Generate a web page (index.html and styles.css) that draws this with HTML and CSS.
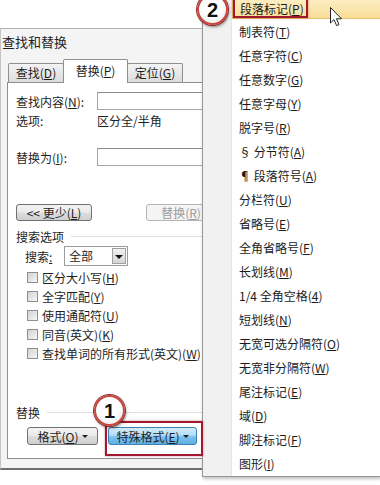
FILE: index.html
```html
<!DOCTYPE html>
<html lang="zh-CN">
<head>
<meta charset="utf-8">
<title>查找和替换 - 特殊格式</title>
<link rel="stylesheet" href="styles.css">
</head>
<body>
<div class="screen">
  <!-- dialog -->
  <div class="dialog">
    <div class="title">查找和替换</div>
    <div class="tabs">
      <div class="tab t1">查找(<u>D</u>)</div>
      <div class="tab active">替换(<u>P</u>)</div>
      <div class="tab t3">定位(<u>G</u>)</div>
    </div>
    <div class="panel">
      <div class="field-row find">
        <span class="label">查找内容(<u>N</u>):</span>
        <span class="input"></span>
      </div>
      <div class="field-row opts">
        <span class="label">选项:</span>
        <span>区分全/半角</span>
      </div>
      <div class="field-row repl">
        <span class="label">替换为(<u>I</u>):</span>
        <span class="input"></span>
      </div>
      <div class="btn-row">
        <span class="btn less">&lt;&lt; 更少(<u>L</u>)</span>
        <span class="btn disabled">替换(<u>R</u>)</span>
      </div>
      <div class="group-title first"><span>搜索选项</span></div>
      <div class="search-row">
        <span class="label">搜索<u>:</u></span>
        <span class="combo">
          <span class="combo-text">全部</span>
          <span class="combo-btn"></span>
        </span>
      </div>
      <div class="checks">
        <div class="check"><span class="box"></span>区分大小写(<u>H</u>)</div>
        <div class="check"><span class="box"></span>全字匹配(<u>Y</u>)</div>
        <div class="check"><span class="box"></span>使用通配符(<u>U</u>)</div>
        <div class="check"><span class="box"></span>同音(英文)(<u>K</u>)</div>
        <div class="check"><span class="box"></span>查找单词的所有形式(英文)(<u>W</u>)</div>
      </div>
      <div class="group-title second"><span>替换</span></div>
      <div class="bottom-btns">
        <span class="btn fmt">格式(<u>O</u>) <i class="arrow"></i></span>
        <span class="btn special">特殊格式(<u>E</u>) <i class="arrow"></i></span>
      </div>
    </div>
  </div>

  <!-- special format menu -->
  <div class="menu">
    <div class="item hover">段落标记(<u>P</u>)</div>
    <div class="item">制表符(<u>T</u>)</div>
    <div class="item">任意字符(<u>C</u>)</div>
    <div class="item">任意数字(<u>G</u>)</div>
    <div class="item">任意字母(<u>Y</u>)</div>
    <div class="item">脱字号(<u>R</u>)</div>
    <div class="item">§ 分节符(<u>A</u>)</div>
    <div class="item">¶ 段落符号(<u>A</u>)</div>
    <div class="item">分栏符(<u>U</u>)</div>
    <div class="item">省略号(<u>E</u>)</div>
    <div class="item">全角省略号(<u>F</u>)</div>
    <div class="item">长划线(<u>M</u>)</div>
    <div class="item">1/4 全角空格(<u>4</u>)</div>
    <div class="item">短划线(<u>N</u>)</div>
    <div class="item">无宽可选分隔符(<u>O</u>)</div>
    <div class="item">无宽非分隔符(<u>W</u>)</div>
    <div class="item">尾注标记(<u>E</u>)</div>
    <div class="item">域(<u>D</u>)</div>
    <div class="item">脚注标记(<u>F</u>)</div>
    <div class="item">图形(<u>I</u>)</div>
  </div>

  <!-- annotations -->
  <div class="frame frame-special"></div>
  <div class="frame frame-item"></div>
  <div class="badge badge-1">1</div>
  <div class="badge badge-2">2</div>
  <svg class="cursor" width="13" height="20" viewBox="0 0 13 20">
    <path d="M0.5 0.5 L0.5 16 L4 12.6 L6.6 18.6 L9 17.6 L6.5 11.8 L11.5 11.8 Z" fill="#fff" stroke="#222" stroke-width="1"/>
  </svg>
</div>
</body>
</html>
```

FILE: styles.css
```css
* {
    margin: 0;
    padding: 0;
    box-sizing: border-box;
}

body {
    width: 380px;
    height: 485px;
    overflow: hidden;
    background: #fff;
    font-family: "Noto Sans CJK SC", "Noto Sans", sans-serif;
    font-size: 12px;
    color: #1e1e1e;
}

u {
    text-decoration: underline;
    text-underline-offset: 1px;
}

.screen {
    position: relative;
    display: flex;
    height: 485px;
}

/* dialog */

.dialog {
    flex: none;
    width: 202px;
    height: 442px;
    margin-top: 28px;
    overflow: hidden;
    background: #f4f4f4;
    border-top: 1px solid #b4b4b4;
    border-left: 1px solid #c4c4c4;
    border-bottom: 2px solid #6f6f6f;
}

.title {
    height: 26px;
    line-height: 26px;
    padding-left: 1px;
    font-size: 13px;
}

.tabs {
    display: flex;
    align-items: flex-end;
    height: 27px;
    padding-left: 7px;
}

.tab {
    position: relative;
    height: 19px;
    line-height: 18px;
    text-align: center;
    border: 1px solid #8e8f8f;
    border-bottom: none;
    background: linear-gradient(#f4f4f4, #dcdcdc);
    border-radius: 2px 2px 0 0;
}

.t1 {
    width: 56px;
}

.t3 {
    width: 56px;
    margin-left: -1px;
}

.tab.active {
    z-index: 1;
    width: 65px;
    height: 24px;
    margin-left: -1px;
    margin-bottom: -1px;
    line-height: 21px;
    background: #fff;
}

.panel {
    width: 300px;
    height: 377px;
    margin-left: 6px;
    padding-left: 8px;
    background: #fff;
    border: 1px solid #8e8f8f;
}

.field-row {
    display: flex;
    align-items: center;
}

.field-row .label {
    width: 81px;
    flex: none;
}

.find {
    height: 18px;
    margin-top: 9px;
}

.opts {
    height: 14px;
    margin-top: 3px;
}

.repl {
    height: 18px;
    margin-top: 21px;
}

.input {
    width: 200px;
    height: 18px;
    border: 1px solid #a6a6a6;
    border-top-color: #8a8a8a;
    background: #fff;
}

.btn {
    display: flex;
    align-items: center;
    justify-content: center;
    height: 17px;
    border: 1px solid #707070;
    border-radius: 3px;
    background: linear-gradient(#f3f3f3 0%, #ebebeb 48%, #dddddd 52%, #cfcfcf 100%);
    white-space: nowrap;
}

.btn-row {
    display: flex;
    gap: 54px;
    height: 17px;
    margin-top: 38px;
}

.less {
    width: 76px;
}

.btn.disabled {
    width: 70px;
    color: #9a9a9a;
    border-color: #b5b5b5;
    background: #f4f4f4;
}

.group-title {
    display: flex;
    align-items: center;
    height: 14px;
}

.group-title::after {
    content: "";
    flex: 1;
    height: 1px;
    margin-left: 7px;
    background: #d5dfe5;
}

.group-title.first {
    margin-top: 8px;
}

.group-title.second {
    margin-top: 42px;
}

.search-row {
    display: flex;
    align-items: center;
    height: 20px;
    margin-top: 3px;
    padding-left: 9px;
}

.search-row .label {
    width: 39px;
}

.combo {
    display: flex;
    width: 64px;
    height: 20px;
    border: 1px solid #9c9c9c;
    background: #fff;
}

.combo-text {
    flex: 1;
    line-height: 18px;
    padding-left: 4px;
}

.combo-btn {
    position: relative;
    width: 14px;
    margin: 1px;
    border: 1px solid #a0a0a0;
    background: linear-gradient(#f0f0f0, #d6d6d6);
}

.combo-btn::after {
    content: "";
    position: absolute;
    left: 2px;
    top: 6px;
    border-left: 4px solid transparent;
    border-right: 4px solid transparent;
    border-top: 4px solid #111;
}

.checks {
    margin-top: 2px;
    padding-left: 11px;
}

.check {
    display: flex;
    align-items: center;
    height: 19px;
    white-space: nowrap;
}

.box {
    flex: none;
    width: 11px;
    height: 11px;
    margin-right: 4px;
    border: 1px solid #8f8f8f;
    background: linear-gradient(135deg, #d2d2d2, #f6f6f6);
}

.bottom-btns {
    display: flex;
    gap: 10px;
    height: 18px;
    margin-top: 8px;
    padding-left: 11px;
}

.bottom-btns .btn {
    height: 18px;
}

.fmt {
    width: 71px;
}

.btn.special {
    width: 89px;
    border-color: #3c7fb1;
    background: linear-gradient(#d4ecfb 0%, #b4dcf6 45%, #7cc0ec 55%, #5fb0e4 100%);
}

.arrow {
    display: inline-block;
    margin-left: 3px;
    border-left: 3px solid transparent;
    border-right: 3px solid transparent;
    border-top: 3px solid #222;
}

/* popup menu */

.menu {
    flex: none;
    width: 178px;
    height: 481px;
    margin-top: -4px;
    border-left: 1px solid #979797;
    border-bottom: 1px solid #979797;
    background: linear-gradient(to right, #f1f1f1 0, #f1f1f1 28px, #e4e4e4 28px, #e4e4e4 29px, #fff 29px);
    box-shadow: 1px 2px 3px rgba(0, 0, 0, 0.25);
}

.item {
    height: 24px;
    line-height: 24px;
    margin-left: 29px;
    padding-left: 7px;
    color: #1b1b1b;
    white-space: nowrap;
}

.item.hover {
    line-height: 22px;
    margin-top: 1px;
    margin-bottom: 1px;
    height: 22px;
    background: linear-gradient(#fdefc6, #f9dd98);
    border: 1px solid #e5c16f;
    border-right: none;
}

/* annotations */

.frame {
    position: absolute;
    border: 2px solid #a3182e;
    box-shadow: 0 0 2px rgba(160, 20, 40, 0.5);
}

.frame-special {
    left: 105px;
    top: 421px;
    width: 98px;
    height: 35px;
}

.frame-item {
    left: 233px;
    top: -3px;
    width: 75px;
    height: 21px;
}

.badge {
    position: absolute;
    width: 31px;
    height: 31px;
    border-radius: 50%;
    border: 2px solid #c9473f;
    background: radial-gradient(circle at 45% 35%, #fff 45%, #e6e6e6 100%);
    box-shadow: 0 0 0 1px #8e2a26, 1px 2px 3px rgba(0, 0, 0, 0.45);
    font-family: "Liberation Sans", Arial, sans-serif;
    font-weight: bold;
    font-size: 20px;
    line-height: 28px;
    text-align: center;
    color: #111;
}

.badge-1 {
    left: 94px;
    top: 395px;
}

.badge-2 {
    left: 197px;
    top: -6px;
}

.cursor {
    position: absolute;
    left: 330px;
    top: 7px;
}
```
